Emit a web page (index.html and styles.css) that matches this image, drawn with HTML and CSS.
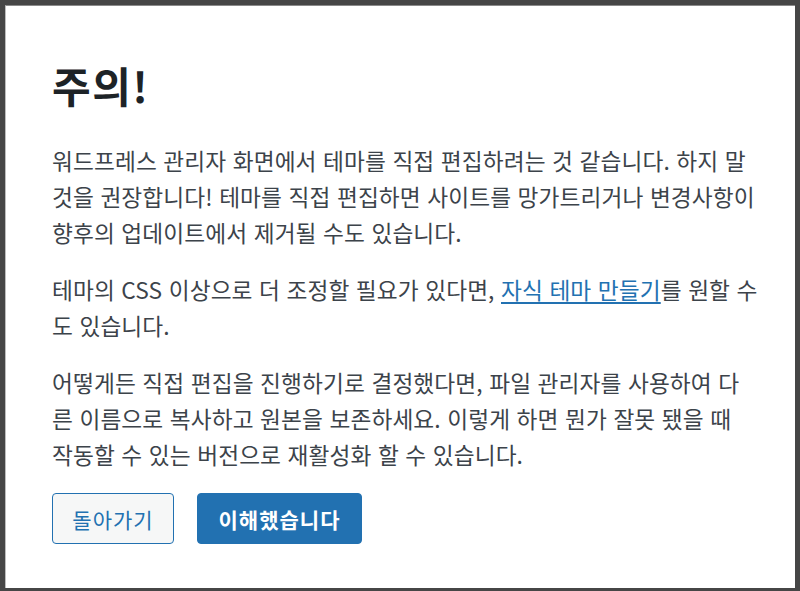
FILE: index.html
```html
<!DOCTYPE html>
<html lang="ko">
<head>
<meta charset="utf-8">
<title>주의!</title>
<link rel="stylesheet" href="styles.css">
</head>
<body>
<div class="dialog">
  <h1 class="title">주의!</h1>
  <p class="text">워드프레스 관리자 화면에서 테마를 직접 편집하려는 것 같습니다. 하지 말 것을 권장합니다! 테마를 직접 편집하면 사이트를 망가트리거나 변경사항이 향후의 업데이트에서 제거될 수도 있습니다.</p>
  <p class="text">테마의 CSS 이상으로 더 조정할 필요가 있다면, <a class="link" href="#">자식 테마 만들기</a>를 원할 수 도 있습니다.</p>
  <p class="text">어떻게든 직접 편집을 진행하기로 결정했다면, 파일 관리자를 사용하여 다른 이름으로 복사하고 원본을 보존하세요. 이렇게 하면 뭔가 잘못 됐을 때 작동할 수 있는 버전으로 재활성화 할 수 있습니다.</p>
  <div class="actions">
    <button class="btn btn-secondary" type="button">돌아가기</button>
    <button class="btn btn-primary" type="button">이해했습니다</button>
  </div>
</div>
</body>
</html>
```
FILE: styles.css
```css
html, body {
  margin: 0;
  padding: 0;
}
body {
  background: #464646;
  width: 800px;
  height: 591px;
  overflow: hidden;
  font-family: "Noto Sans CJK KR", "Noto Sans", sans-serif;
}
.dialog {
  box-sizing: border-box;
  margin: 5px 5px 0 5px;
  width: 790px;
  height: 583px;
  background: #ffffff;
  padding: 0 37px 0 46px;
  border-left: 1px solid #bdbdbd;
  border-top: 1px solid #8a8a8a;
}
.title {
  margin: 0;
  padding-top: 55px;
  font-size: 42px;
  letter-spacing: 1.5px;
  line-height: 48px;
  font-weight: 700;
  color: #1d2327;
}
.text {
  margin: 34px 0 0 0;
  font-size: 22.7px;
  letter-spacing: 0.1px;
  line-height: 36px;
  color: #3c434a;
}
.text + .text {
  margin-top: 21px;
}
.link {
  color: #2271b1;
  text-decoration: underline;
  text-underline-offset: 3px;
}
.actions {
  display: flex;
  gap: 23px;
  margin-top: 20px;
}
.btn {
  box-sizing: border-box;
  height: 51px;
  border-radius: 4px;
  font-family: "Noto Sans CJK KR", "Noto Sans", sans-serif;
  font-size: 21px;
  letter-spacing: 1px;
  padding: 0;
  border: 1px solid #2271b1;
  cursor: pointer;
}
.btn-secondary {
  width: 122px;
  background: #f6f7f7;
  color: #2271b1;
}
.btn-primary {
  width: 165px;
  background: #2271b1;
  color: #ffffff;
  font-weight: 700;
}
```
